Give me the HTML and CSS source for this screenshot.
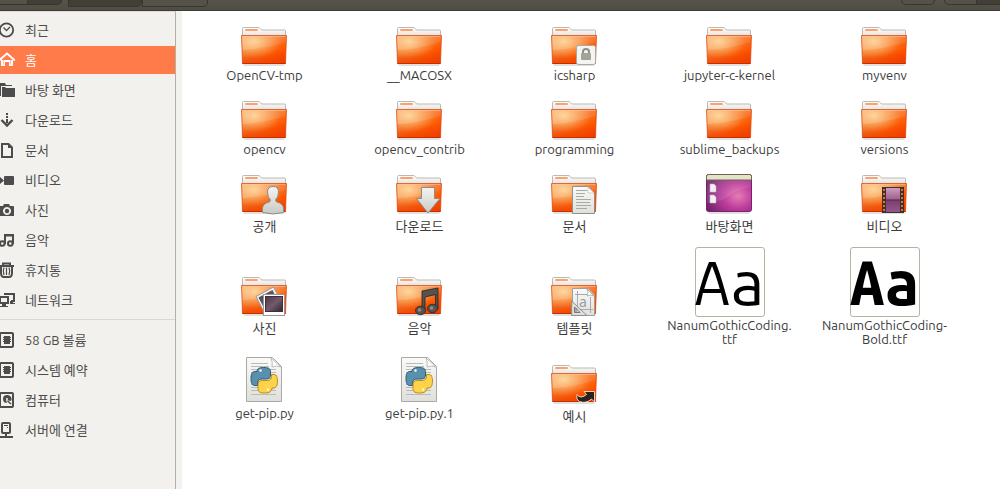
FILE: index.html
```html
<!DOCTYPE html>
<html lang="ko">
<head>
<meta charset="utf-8">
<title>홈</title>
<link rel="stylesheet" href="styles.css">
</head>
<body>
<svg class="sprites" aria-hidden="true">
  <defs>
    <linearGradient id="front" x1="0" y1="0" x2="1" y2="1">
      <stop offset="0" stop-color="#f7a05c"/><stop offset=".4" stop-color="#f58035"/><stop offset=".7" stop-color="#ff5800"/><stop offset="1" stop-color="#f03400"/>
    </linearGradient>
    <radialGradient id="glow" cx=".28" cy=".22" r=".6">
      <stop offset="0" stop-color="#ffd794" stop-opacity=".9"/><stop offset="1" stop-color="#ffb060" stop-opacity="0"/>
    </radialGradient>
    <linearGradient id="base" x1="0" y1="0" x2="0" y2="1">
      <stop offset=".5" stop-color="#e84800" stop-opacity="0"/><stop offset="1" stop-color="#f04000" stop-opacity=".75"/>
    </linearGradient>
    <linearGradient id="gloss" x1="0" y1="0" x2="1" y2="0">
      <stop offset="0" stop-color="#fff" stop-opacity=".18"/><stop offset="1" stop-color="#fff" stop-opacity=".08"/>
    </linearGradient>
    <linearGradient id="back" x1="0" y1="0" x2="0" y2="1">
      <stop offset="0" stop-color="#fff"/><stop offset="1" stop-color="#dddcd8"/>
    </linearGradient>
    <linearGradient id="silver" x1="0" y1="0" x2="0" y2="1">
      <stop offset="0" stop-color="#f4f4f2"/><stop offset="1" stop-color="#c9c9c5"/>
    </linearGradient>
    <linearGradient id="paper" x1="0" y1="0" x2="0" y2="1">
      <stop offset="0" stop-color="#fafaf9"/><stop offset="1" stop-color="#dfdfdc"/>
    </linearGradient>
    <radialGradient id="purple" cx=".7" cy=".58" r=".75">
      <stop offset="0" stop-color="#e67cb4"/><stop offset=".45" stop-color="#bd3c9c"/><stop offset="1" stop-color="#6d2468"/>
    </radialGradient>
    <linearGradient id="film" x1="0" y1="0" x2="0" y2="1">
      <stop offset="0" stop-color="#cf9cc0"/><stop offset=".5" stop-color="#9a5b8c"/><stop offset=".52" stop-color="#7d3d70"/><stop offset="1" stop-color="#94568a"/>
    </linearGradient>
    <linearGradient id="photo" x1="0" y1="0" x2="1" y2="1">
      <stop offset="0" stop-color="#4a3446"/><stop offset=".5" stop-color="#735b6d"/><stop offset="1" stop-color="#2e2233"/>
    </linearGradient>
    <symbol id="folder" viewBox="0 0 49 48">
      <path d="M3 45h42l-1 2H4z" fill="#000" opacity=".12"/>
      <path d="M2.500 19V9.500q0-1 1-1H18q1.500 0 2.500 1.200l1.200 1.300H44.500q1 0 1 1V19z" fill="url(#back)" stroke="#bbb9b3"/>
      <rect x="5" y="10" width="13" height="2" rx="1" fill="#ffa06a"/>
      <path d="M1.500 16.500h45L45.500 44.500h-43z" fill="url(#front)"/>
      <path d="M1.500 16.500h45L45.500 44.500h-43z" fill="url(#base)"/>
      <path d="M1.500 16.500h45L45.500 44.500h-43z" fill="url(#glow)"/>
      <path d="M2 17h44l-.5 6Q24 30 2.500 31z" fill="url(#gloss)"/>
      <path d="M1.500 16.500h45L45.500 44.500h-43z" fill="none" stroke="#d94b15" stroke-opacity=".75"/>
      <path d="M2.500 44.500h43" stroke="#c62e00"/>
      <path d="M2.500 17.500h43" stroke="#ffc79a" stroke-opacity=".5"/>
    </symbol>
    <symbol id="pyfile" viewBox="0 0 49 48">
      <path d="M6.500.5h26l9 9v35h-35z" fill="url(#paper)" stroke="#aaaaa5"/>
      <path d="M31 1q2 4 1 9 5-2 9 0z" fill="#fff" stroke="#bdbdb9"/>
      <path d="M11 6.500h17M11 9.500h18M11 12.500h25M11 15.500h25M11 18.500h26M11 21.500h25M11 24.500h26M11 27.500h25M11 30.500h24M11 33.500h25M11 37.500h25" stroke="#bbbbb6"/>
      <path d="M23.500 10.500c-5 0-6.500 1.500-6.500 4H14.500c-2.500 0-3.500 3-3.500 7s1 7 3.500 7h3v-2.500c0-2.500 2-4 4.500-4h4.500c2.500 0 4-1.500 4-4v-3.500c0-3-2-4-7-4z" fill="#5990ae" stroke="#2f5874"/>
      <path d="M31.500 17.500h2.500c2.500 0 3.500 3 3.500 6.500s-1 7-3.500 7h-2c0 3-2 5-7.500 5s-6.500-2-6.500-4.500v-4c0-2.500 2-4 4.500-4h5c2.500 0 4-1.500 4-4z" fill="#fcd34b" stroke="#b98a14"/>
      <circle cx="20.500" cy="13.500" r="1.200" fill="#fff"/><circle cx="28" cy="32.500" r="1.200" fill="#fff8d8"/>
    </symbol>
  </defs>
</svg>

<header class="toolbar">
  <div class="group">
    <button class="nav" aria-label="뒤로"></button><button class="nav nav-end" aria-label="앞으로"></button>
  </div>
  <div class="group path">
    <button class="crumb current" aria-label="홈"></button><button class="crumb" aria-label="하위 폴더"></button>
  </div>
  <div class="group tools">
    <button class="tool" aria-label="검색"></button>
    <div class="group views"><button class="view" aria-label="목록"></button><button class="view on" aria-label="아이콘"></button></div>
  </div>
</header>

<div class="window">
  <nav class="sidebar">
    <ul class="places">
      <li><a href="#"><svg viewBox="0 0 15 16"><circle cx="6.500" cy="8" r="6.700" fill="none" stroke="currentColor" stroke-width="1.800"/><path d="M3.500 5.500l3 3 3.500-3.500" fill="none" stroke="currentColor" stroke-width="1.300"/></svg>최근</a></li>
      <li><a href="#" class="selected"><svg viewBox="0 0 15 16"><path d="M-1 8.500L7 1.500l8 7" fill="none" stroke="currentColor" stroke-width="2"/><path d="M1 8v6h4v-4h4v4h4V8h-2v4.500h-.5V8h-7v4.500H3V8z"/></svg>홈</a></li>
      <li><a href="#"><svg viewBox="0 0 15 16"><path d="M-2 1h7l1 2h6v1H1v10h-3z"/><path d="M2 5h3l1 1h9v9H2z"/></svg>바탕 화면</a></li>
      <li><a href="#"><svg viewBox="0 0 15 16"><path d="M6 1h2v2H6zM6 4h2v2H6zM6 7h2v4H6z"/><path d="M1.500 8L7 13.500 12.500 8" fill="none" stroke="currentColor" stroke-width="2.400"/></svg>다운로드</a></li>
      <li><a href="#"><svg viewBox="0 0 15 16"><path d="M2 2h6.500L12 5.500V15H2z" fill="none" stroke="currentColor" stroke-width="2"/><path d="M8 2v4h4z"/></svg>문서</a></li>
      <li><a href="#"><svg viewBox="0 0 15 16"><rect x="4" y="4" width="10" height="9" rx="1"/><path d="M-1 4v9l5-4.500z"/></svg>비디오</a></li>
      <li><a href="#"><svg viewBox="0 0 15 16"><path fill-rule="evenodd" d="M-1 4h4l1-2h5l1 2h3q1 0 1 1v9H-1zM7 5a4 4 0 1 0 .01 0z"/><circle cx="7" cy="9" r="2.200"/></svg>사진</a></li>
      <li><a href="#"><svg viewBox="0 0 15 16"><g fill="none" stroke="currentColor" stroke-width="2"><path d="M5 12V3h8v9M5 3.500h8"/><circle cx="2.300" cy="11.500" r="2.300"/><circle cx="10.300" cy="11.500" r="2.300"/></g></svg>음악</a></li>
      <li><a href="#"><svg viewBox="0 0 15 16"><g fill="none" stroke="currentColor"><path stroke-width="2" d="M-1 4h15M3 3V1.500h7V3M1 5v6q0 4 3 4h5q3 0 3-4V5"/><path stroke-width="1.200" d="M4 5.500q-1.500 4 0 7.500M6.500 5.500V13M9 5.500q1.500 4 0 7.500"/></g></svg>휴지통</a></li>
      <li><a href="#"><svg viewBox="0 0 15 16"><g fill="none" stroke="currentColor" stroke-width="2"><path d="M5 3V2h9v7h-3"/><path d="M0 5h8v6H0z"/></g><path d="M2 12h4v2h2v1H0v-1h2zM10 9h3v2h2v1h-5z"/></svg>네트워크</a></li>
    </ul>
    <ul class="places devices">
      <li><a href="#"><svg viewBox="0 0 15 16"><rect x="0" y="1" width="13" height="14" rx="1" fill="none" stroke="currentColor" stroke-width="2"/><rect x="4" y="4" width="6" height="8"/><path d="M3 5.500h8M3 7.500h8M3 9.500h8" stroke="currentColor"/></svg>58 GB 볼륨</a></li>
      <li><a href="#"><svg viewBox="0 0 15 16"><rect x="0" y="1" width="13" height="14" rx="1" fill="none" stroke="currentColor" stroke-width="2"/><rect x="4" y="4" width="6" height="8"/><path d="M3 5.500h8M3 7.500h8M3 9.500h8" stroke="currentColor"/></svg>시스템 예약</a></li>
      <li><a href="#"><svg viewBox="0 0 15 16"><rect x="0" y="1" width="13" height="14" rx="1" fill="none" stroke="currentColor" stroke-width="2"/><path fill-rule="evenodd" d="M7 3a4 4 0 1 0 0 8l-1-3 5 1A4 4 0 0 0 7 3zm0 3a1 1 0 1 1-.01 0z"/><path d="M7.500 9l3.500 3" stroke="currentColor" stroke-width="1.500"/></svg>컴퓨터</a></li>
      <li><a href="#"><svg viewBox="0 0 15 16"><rect x="2" y="1" width="8" height="10" rx="1" fill="none" stroke="currentColor" stroke-width="2"/><path d="M4 3h4v1H4zM7 5h1v1H7zM5 11h2v3h6v2H-1v-2h6z"/></svg>서버에 연결</a></li>
    </ul>
  </nav>

  <main class="files">
    <a class="file" href="#"><svg class="art"><use href="#folder"/></svg><span>OpenCV-tmp</span></a>
    <a class="file" href="#"><svg class="art"><use href="#folder"/></svg><span>__MACOSX</span></a>
    <a class="file" href="#"><svg class="art" viewBox="0 0 49 48"><use href="#folder"/><rect x="26.500" y="26.500" width="19" height="19" rx="2" fill="#f4f4f2" stroke="#a9a8a3"/><path d="M33 35v-2.500q0-2.500 3-2.500t3 2.500V35" fill="none" stroke="#8f8f84" stroke-width="2"/><rect x="31" y="34" width="10" height="7" rx="1" fill="#a3a398"/></svg><span>icsharp</span></a>
    <a class="file" href="#"><svg class="art"><use href="#folder"/></svg><span>jupyter-c-kernel</span></a>
    <a class="file" href="#"><svg class="art"><use href="#folder"/></svg><span>myvenv</span></a>

    <a class="file" href="#"><svg class="art"><use href="#folder"/></svg><span>opencv</span></a>
    <a class="file" href="#"><svg class="art"><use href="#folder"/></svg><span>opencv_contrib</span></a>
    <a class="file" href="#"><svg class="art"><use href="#folder"/></svg><span>programming</span></a>
    <a class="file" href="#"><svg class="art"><use href="#folder"/></svg><span>sublime_backups</span></a>
    <a class="file" href="#"><svg class="art"><use href="#folder"/></svg><span>versions</span></a>

    <a class="file" href="#"><svg class="art" viewBox="0 0 49 48"><use href="#folder"/><path d="M22.500 45.500v-4q0-5 7-6.500l1-2q-3-3-3-8 0-5.500 5.500-5.500t5.500 5.500q0 5-3 8l1 2q7 1.500 7 6.500v4q-10.500 3-21 0z" fill="url(#silver)" stroke="#8d8d88"/></svg><span class="ko">공개</span></a>
    <a class="file" href="#"><svg class="art" viewBox="0 0 49 48"><use href="#folder"/><path d="M26.500 20.500h13v11h5.500L33 46 21.500 31.500h5z" fill="url(#silver)" stroke="#8d8d88"/></svg><span class="ko">다운로드</span></a>
    <a class="file" href="#"><svg class="art" viewBox="0 0 49 48"><use href="#folder"/><path d="M22.500 19.500H38l6.500 6.500v20.500h-22z" fill="url(#paper)" stroke="#91918b"/><path d="M38 20v6h6z" fill="#fff" stroke="#b5b5b0" stroke-width=".6"/><path d="M26 23.500h11M26 26.500h9M26 29.500h8M26 32.500h15M26 35.500h14M26 38.500h15M26 41.500h11" stroke="#aaaaa5"/></svg><span class="ko">문서</span></a>
    <a class="file" href="#"><svg class="art" viewBox="0 0 49 48"><path d="M3 45h42l-1 2H4z" opacity=".12"/><rect x="1.500" y="7.500" width="45" height="37" rx="2" fill="url(#purple)" stroke="#791e70"/><path d="M2 13h44v7Q30 23 18 33L2 36z" fill="#fff" opacity=".1"/><path d="M1.500 13V9.500q0-2 2-2h41q2 0 2 2V13z" fill="#e6e2ca" stroke="#6c674d"/><path d="M5 17h4l2 2v6H5zM5 28h4l2 2v6H5z" fill="#f4eff4" stroke="#c7a7c4" stroke-width=".6"/></svg><span class="ko">바탕화면</span></a>
    <a class="file" href="#"><svg class="art" viewBox="0 0 49 48"><use href="#folder"/><rect x="22" y="20" width="22" height="26" fill="#37332f"/><rect x="26" y="21" width="14" height="24" fill="url(#film)"/><path d="M26 33h14" stroke="#4c2c48"/><path d="M24 22v23M42 22v23" stroke="#f06a25" stroke-width="2" stroke-dasharray="2 2"/></svg><span class="ko">비디오</span></a>

    <a class="file" href="#"><svg class="art" viewBox="0 0 49 48"><use href="#folder"/><path d="M16 27.500L33.500 18l9 17L25 45z" fill="#f1f1ef" stroke="#999994"/><path d="M18.500 28.500l14-7.500 7 14-14 7z" fill="url(#photo)"/><rect x="23.500" y="25.500" width="21" height="21" fill="#fff" stroke="#999994"/><rect x="25.500" y="27.500" width="17" height="15" fill="url(#photo)" stroke="#3c2f40"/></svg><span class="ko">사진</span></a>
    <a class="file" href="#"><svg class="art" viewBox="0 0 49 48"><use href="#folder"/><g stroke="#262522" stroke-width=".8" fill="#55534f"><path d="M27 22l16-3v21h-2.500V25.500L30 28v14h-3z"/><ellipse cx="25.500" cy="41.500" rx="5" ry="4.200"/><ellipse cx="37.500" cy="39.500" rx="5" ry="4.200"/></g><circle cx="24.500" cy="41" r="1.800" fill="#8f8d87"/><circle cx="36.500" cy="39" r="1.800" fill="#8f8d87"/></svg><span class="ko">음악</span></a>
    <a class="file" href="#"><svg class="art" viewBox="0 0 49 48"><use href="#folder"/><path d="M22.500 19.500H38l6.500 6.500v20.500h-22z" fill="url(#paper)" stroke="#a0a09b"/><path d="M37 20q2 3 0 7 4-2 7 0z" fill="#fff" stroke="#b5b5b0"/><path d="M25 25.500h12M25 40.500h18M27.500 22v22M40.500 28v16" stroke="#aaaab0"/><text class="glyph" x="29" y="38">a</text><path d="M21.500 32v14.500H37z" fill="#deded9" fill-opacity=".8" stroke="#8f8f93"/><path d="M24.500 38v5.500H30zM26 39v4" fill="none" stroke="#77777d"/></svg><span class="ko">템플릿</span></a>
    <a class="file" href="#"><span class="art thumb"><span>Aa</span></span><span>NanumGothicCoding.<wbr>ttf</span></a>
    <a class="file" href="#"><span class="art thumb bold"><span>Aa</span></span><span>NanumGothicCoding-<wbr>Bold.ttf</span></a>

    <a class="file" href="#"><svg class="art"><use href="#pyfile"/></svg><span>get-pip.py</span></a>
    <a class="file" href="#"><svg class="art"><use href="#pyfile"/></svg><span>get-pip.py.1</span></a>
    <a class="file" href="#"><svg class="art" viewBox="0 0 49 48"><use href="#folder"/><path d="M34 34.500h10.500V45l-3-3q-5.500 5-12 2.500-3.500-2-2.500-7 3.500 5 9.500 0z" fill="#29231f" stroke="#ffe2c9" stroke-width=".9"/></svg><span class="ko">예시</span></a>
  </main>
</div>
</body>
</html>
```
FILE: styles.css
```css
* { box-sizing: border-box; }

body {
  margin: 0;
  padding-right: 3px;
  min-height: 100vh;
  display: flex;
  flex-direction: column;
  background: #fff;
  color: #3c3c3c;
  font: 13px/14px Ubuntu, "Noto Sans", "Noto Sans CJK KR", sans-serif;
}

a { color: inherit; text-decoration: none; }
ul { list-style: none; margin: 0; padding: 0; }
.sprites { position: absolute; width: 0; height: 0; }

.toolbar {
  display: flex;
  align-items: flex-start;
  height: 11px;
  background: linear-gradient(#55534a, #504d44);
  border-bottom: 1px solid #3f3c36;
}
.toolbar button {
  padding: 0;
  border: 1px solid #38362f;
  border-top: 0;
  background: #545249;
}
.group { display: flex; }
.toolbar .nav { width: 28px; height: 5px; border-left: 0; }
.toolbar .nav-end { width: 34px; background: #413f38; border-radius: 0 0 5px 0; }
.path { margin-left: 6px; }
.toolbar .crumb { width: 66px; height: 7px; border-radius: 0 0 5px 0; }
.toolbar .current { width: 74px; background: #413f38; }
.tools { margin-left: auto; gap: 9px; }
.toolbar .tool { width: 34px; height: 5px; border-radius: 0 0 5px 5px; }
.toolbar .view { width: 33px; height: 5px; border-radius: 0 0 0 5px; }
.toolbar .on { width: 23px; border-left: 0; border-right: 0; border-radius: 0; background: #413f38; }

.window { flex: 1; display: flex; }

.sidebar {
  flex: 0 0 176px;
  padding-top: 4px;
  background: #f2f1ee;
  border-top: 1px solid #dedbd5;
  border-right: 1px solid #b9aca3;
  color: #4c4c4c;
}
.places { display: grid; gap: 2px; }
.places a {
  display: flex;
  align-items: center;
  gap: 10px;
  height: 28px;
}
.places svg { width: 15px; height: 16px; fill: currentColor; }
.places .selected { background: #ff7b4a; color: #fff; }
.devices {
  margin-top: 5px;
  padding-top: 6px;
  border-top: 1px solid #dad7d1;
}

.files {
  flex: 1;
  display: grid;
  grid-template-columns: repeat(auto-fill, 155px);
  align-content: start;
  padding: 8px 0 0 5px;
  border-left: 6px solid #f2f1ee;
}
.file {
  grid-row: span 2;
  display: grid;
  grid-template-rows: subgrid;
  justify-items: center;
  text-align: center;
  padding-bottom: 11px;
}
.file > span:last-child { margin-top: 1px; max-width: 132px; }
.file > .ko { line-height: 20px; }
.art { width: 49px; height: 48px; align-self: end; }
.glyph { font: 14px "Noto Sans", sans-serif; fill: #9b9ba2; }

.thumb {
  display: flex;
  align-items: center;
  justify-content: center;
  width: 70px;
  height: 70px;
  border: 1px solid #b4b4a5;
  border-radius: 3px;
  color: #000;
  font: 62px/68px "Ubuntu Mono", "Ubuntu Condensed", "DejaVu Sans Condensed", sans-serif;
}
.bold { font-weight: 700; }
```
